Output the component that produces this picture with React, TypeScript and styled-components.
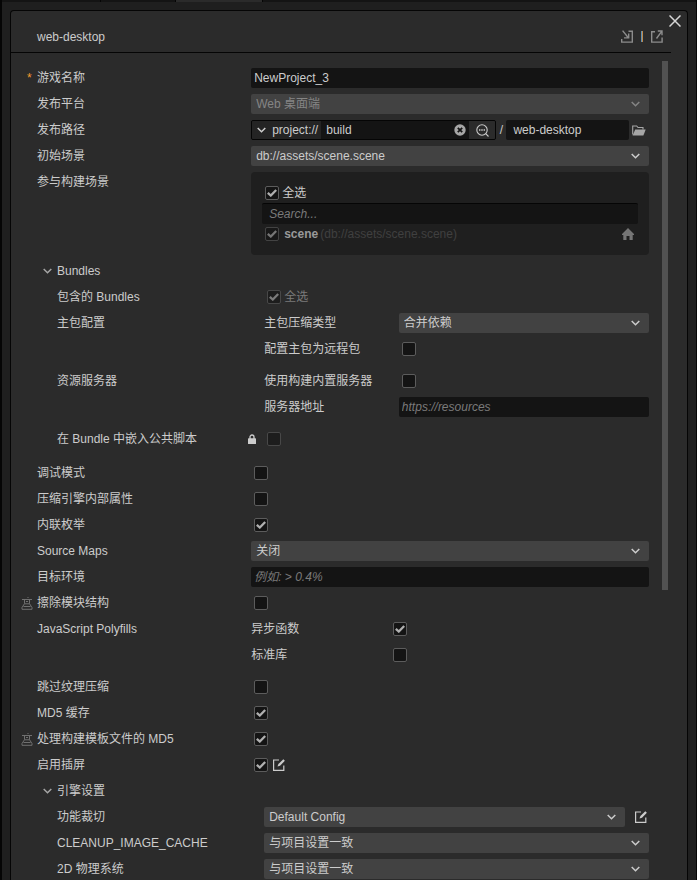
import React, { useId } from "react";
import styled, { createGlobalStyle, css } from "styled-components";

const GlobalStyle = createGlobalStyle`
  * { box-sizing: border-box; }
  html, body, #root { height: 100%; margin: 0; }
  body {
    background: #1f1f1f;
    color: #cccccc;
    font: 12px/20px "Liberation Sans", "Noto Sans CJK SC", sans-serif;
    overflow: hidden;
  }
  button, input, select { font: inherit; color: inherit; }
`;

const Window = styled.div`
  height: 100vh;
  display: flex;
  flex-direction: column;
  border-left: 2px solid #050505;
  border-right: 1px solid #050505;
  background: #1f1f1f;
`;

const TabStrip = styled.div`
  display: grid;
  grid-template-columns: 99px 75px 87px 1fr;
  height: 2px;
  flex: none;
  background: #141414;
`;

const TabEdge = styled.div<{ $active?: boolean }>`
  border-right: 1px solid #050505;
  background: ${(p) => (p.$active ? "#2b2b2b" : "#141414")};
`;

const Panel = styled.main`
  position: relative;
  flex: 1;
  min-height: 0;
  display: flex;
  flex-direction: column;
  margin: 8px 8px 0;
  border: 1px solid #050505;
  border-bottom: 0;
  border-radius: 4px 4px 0 0;
  background: #2b2b2b;
`;

const CloseButton = styled.button`
  position: absolute;
  top: 2px;
  right: 4px;
  width: 16px;
  height: 16px;
  padding: 0;
  border: 0;
  background: none;
  display: grid;
  place-items: center;
`;

const Header = styled.header`
  flex: none;
  display: flex;
  align-items: center;
  justify-content: space-between;
  height: 42px;
  margin-right: 16px;
  padding: 10px 8px 0 26px;
  border-bottom: 1px solid #050505;
`;

const Title = styled.h1`
  margin: 0;
  font-size: 12px;
  font-weight: 400;
`;

const HeaderActions = styled.div`
  display: flex;
  align-items: center;
  gap: 8px;
`;

const Divider = styled.span`
  width: 2px;
  height: 11px;
  border-left: 1px solid #5f8fb0;
  border-right: 1px solid #c08a4c;
`;

const IconButton = styled.button<{ $muted?: boolean }>`
  flex: none;
  display: grid;
  place-items: center;
  padding: 0;
  border: 0;
  background: none;
  color: ${(p) => (p.$muted ? "#8c8c8c" : "#cccccc")};
`;

const Body = styled.div`
  flex: 1;
  min-height: 0;
  display: flex;
  justify-content: space-between;
  padding: 8px 19px 0 26px;
`;

const Form = styled.form`
  flex: 1;
  min-width: 0;
  display: flex;
  flex-direction: column;
  gap: 6px;
  margin-right: 13px;
  padding-top: 7px;
`;

const ScrollTrack = styled.div`
  width: 6px;
`;

const ScrollThumb = styled.div`
  height: 64.6%;
  background: #525252;
`;

const Row = styled.div`
  position: relative;
  display: grid;
  grid-template-columns: 35% minmax(0, 1fr);
  align-items: start;
`;

const Label = styled.label`
  white-space: nowrap;
`;

const Caption = styled.span`
  white-space: nowrap;
`;

const Control = styled.div`
  display: flex;
  align-items: center;
  min-height: 20px;
`;

const Stack = styled.div<{ $tail?: number }>`
  display: flex;
  flex-direction: column;
  gap: 6px;
  padding-bottom: ${(p) => p.$tail ?? 0}px;
`;

const Nested = styled(Stack)`
  padding-left: 20px;
`;

const SectionHead = styled.button`
  align-self: flex-start;
  display: flex;
  align-items: center;
  gap: 5px;
  height: 20px;
  padding: 0 0 0 6px;
  border: 0;
  background: none;

  svg { color: #a6a6a6; }
`;

const Marker = styled.span`
  position: absolute;
  left: -16px;
  top: 0;
  height: 20px;
  display: grid;
  place-items: center;
  color: #707070;
`;

const Required = styled(Marker)`
  left: -10px;
  color: #f49b2f;
`;

const LockMarker = styled(Marker)`
  left: calc(35% - 16px);
  color: #cccccc;
`;

const TextInput = styled.input<{ $inset?: number }>`
  flex: 1;
  min-width: 0;
  width: 100%;
  height: 20px;
  padding: 0 ${(p) => p.$inset ?? 3}px;
  border: 0;
  border-radius: 2px;
  background: #141414;
  outline: none;
  &::placeholder {
    color: #7a7a7a;
    font-style: italic;
    opacity: 1;
  }
`;

const SelectBox = styled.div`
  position: relative;
  flex: 1;
  min-width: 0;
  display: grid;
  align-items: center;
`;

const NativeSelect = styled.select`
  appearance: none;
  width: 100%;
  height: 20px;
  padding: 0 24px 0 5px;
  border: 0;
  border-radius: 2px;
  background: #424242;
  outline: none;
  &:disabled { color: #858585; opacity: 1; }
`;

const SelectArrow = styled.span<{ $dim?: boolean }>`
  position: absolute;
  right: 9px;
  display: grid;
  pointer-events: none;
  color: ${(p) => (p.$dim ? "#858585" : "#cccccc")};
`;

const CheckFrame = styled.span<{ $dim?: boolean }>`
  flex: none;
  display: grid;
  place-items: center;
  width: 14px;
  height: 14px;
  margin: 0 3px;
  color: #b0b0b0;
  opacity: ${(p) => (p.$dim ? 0.6 : 1)};
`;

const CheckInput = styled.input`
  appearance: none;
  grid-area: 1 / 1;
  width: 14px;
  height: 14px;
  margin: 0;
  border: 1px solid #5c5c5c;
  border-radius: 2px;
  background: #141414;
`;

const Tick = styled.svg`
  grid-area: 1 / 1;
  z-index: 1;
  pointer-events: none;
`;

const PathControl = styled.div`
  display: grid;
  grid-template-columns: minmax(0, 2fr) 10px minmax(0, 1fr) 20px;
  align-items: center;
  width: 100%;
`;

const PathField = styled.div`
  min-width: 0;
  display: flex;
  align-items: center;
  height: 20px;
  border: 1px solid #050505;
  border-radius: 2px;
  background: #141414;
  overflow: hidden;
`;

const ProtocolButton = styled.button`
  flex: none;
  display: flex;
  align-items: center;
  gap: 6px;
  height: 18px;
  padding: 0 3px 0 5px;
  border: 0;
  background: #242424;
`;

const SearchButton = styled(IconButton)`
  width: 26px;
  height: 18px;
  margin-left: 3px;
  background: #2b2b2b;
`;

const Slash = styled.span`
  text-align: center;
`;

const FolderButton = styled(IconButton)`
  justify-self: center;
  color: #a6a6a6;
`;

const SceneBox = styled.div`
  padding: 11px;
  border-radius: 4px;
  background: #1f1f1f;
`;

const SceneSearch = styled(TextInput)`
  display: block;
  height: 21px;
  border-top: 1px solid #050505;
`;

const SceneRow = styled.div`
  display: flex;
  align-items: center;
  height: 20px;
  white-space: nowrap;
`;

const SceneName = styled.label`
  margin-left: 2px;
  color: #999999;
  font-weight: 700;
`;

const ScenePath = styled.span`
  flex: 1;
  margin-left: 2px;
  color: #404040;
`;

const HomeButton = styled(IconButton)`
  margin-right: 4px;
  color: #757575;
`;

const CheckLabel = styled.label<{ $dim?: boolean }>`
  ${(p) => p.$dim && css`color: #7a7a7a;`}
`;

const EditButton = styled(IconButton)<{ $gap: number; $end?: number }>`
  margin: 0 ${(p) => p.$end ?? 0}px 0 ${(p) => p.$gap}px;
`;

const Chevron = () => (
  <svg width="9" height="6" viewBox="0 0 9 6" fill="none" stroke="currentColor" strokeWidth="1.5">
    <path d="M.7 1l3.8 3.8L8.3 1" />
  </svg>
);

const EditIcon = () => (
  <svg width="12" height="12" viewBox="0 0 12 12" fill="none" stroke="currentColor" strokeWidth="1.2">
    <path d="M6 1H.6v10.4h10.2V6.5" />
    <path d="M4.5 7.6l.9-2.5L10.3.2l1.6 1.6L7 6.7z" fill="currentColor" stroke="none" />
  </svg>
);

const ImportIcon = () => (
  <svg width="12" height="13" viewBox="0 0 12 13" fill="none" stroke="currentColor" strokeWidth="1.4">
    <path d="M7.5 1.3h3.8v10.8H.7V9" />
    <path d="M1.6.6l5.9 7.4M3 7.9h4.7V3.6" />
  </svg>
);

const ExportIcon = () => (
  <svg width="12" height="13" viewBox="0 0 12 13" fill="none" stroke="currentColor" strokeWidth="1.4">
    <path d="M4 1.7H.7v10.4h10.4V7.5" />
    <path d="M5.5 8.5l5.2-7.2M6.8 1h4.2v4.2" />
  </svg>
);

const CloseIcon = () => (
  <svg width="12" height="12" viewBox="0 0 12 12" fill="none" stroke="#d6d6d6" strokeWidth="1.5">
    <path d="M.5.5l11 11M11.5.5l-11 11" />
  </svg>
);

const ClearIcon = () => (
  <svg width="12" height="12" viewBox="0 0 12 12">
    <circle cx="6" cy="6" r="5.7" fill="#a6a6a6" />
    <path d="M3.8 3.8l4.4 4.4M8.2 3.8L3.8 8.2" stroke="#141414" strokeWidth="1.8" />
  </svg>
);

const SearchIcon = () => (
  <svg width="13" height="13" viewBox="0 0 13 13" fill="none" stroke="currentColor" strokeWidth="1.1">
    <circle cx="6" cy="6" r="5.2" />
    <path d="M9.7 9.7l2.8 2.8" />
    <path d="M3 6h1.4M5.3 6h1.4M7.6 6H9" strokeWidth="1.4" />
  </svg>
);

const FolderIcon = () => (
  <svg width="14" height="11" viewBox="0 0 14 11">
    <path d="M.7 9.5V1h4l1.3 1.5h5V4.5" fill="none" stroke="currentColor" strokeWidth="1.1" />
    <path d="M3.2 4.5H13.7L11.4 10.5H.6z" fill="currentColor" />
  </svg>
);

const HomeIcon = () => (
  <svg width="12" height="12" viewBox="0 0 12 12" fill="currentColor">
    <path d="M6 0L0 6v1h1.3v5h3.2V8h3v4h3.2V7H12V6z" />
  </svg>
);

const LockIcon = () => (
  <svg width="8" height="10" viewBox="0 0 8 10">
    <path d="M2 5V3a2 2 0 014 0v2" fill="none" stroke="currentColor" strokeWidth="1.3" />
    <rect x="0" y="4.2" width="8" height="5.8" rx=".6" fill="currentColor" />
  </svg>
);

const FlaskIcon = () => (
  <svg width="12" height="13" viewBox="0 0 12 13" fill="none" stroke="currentColor">
    <path d="M1 2.5h10M3.5 2.5v4.2L1 10.5v1.8h10v-1.8L8.5 6.7V2.5" />
    <path d="M5 4.5h2M3.5 6.8h5M2.5 9.5h7" />
    <path d="M6.5.5h1" />
  </svg>
);

type CheckProps = { id?: string; checked?: boolean; dim?: boolean };

const Check = ({ id, checked, dim }: CheckProps) => (
  <CheckFrame $dim={dim}>
    <CheckInput type="checkbox" id={id} defaultChecked={checked} disabled={dim} />
    {checked && (
      <Tick width="10" height="8" viewBox="0 0 10 8" fill="none" stroke="currentColor" strokeWidth="2.3">
        <path d="M.8 3.8l3 2.7L9.2 1" />
      </Tick>
    )}
  </CheckFrame>
);

const Select = ({ id, value, disabled }: { id: string; value: string; disabled?: boolean }) => (
  <SelectBox>
    <NativeSelect id={id} disabled={disabled}>
      <option>{value}</option>
    </NativeSelect>
    <SelectArrow $dim={disabled}><Chevron /></SelectArrow>
  </SelectBox>
);

type FieldProps = {
  label: string;
  marker?: React.ReactNode;
  children: (id: string) => React.ReactNode;
};

const Field = ({ label, marker, children }: FieldProps) => {
  const id = useId();
  return (
    <Row>
      {marker}
      <Label htmlFor={id}>{label}</Label>
      <Control>{children(id)}</Control>
    </Row>
  );
};

const flask = <Marker><FlaskIcon /></Marker>;

export default function App() {
  return (
    <>
      <GlobalStyle />
      <Window>
        <TabStrip>
          <TabEdge />
          <TabEdge />
          <TabEdge $active />
        </TabStrip>
        <Panel>
          <CloseButton aria-label="关闭面板"><CloseIcon /></CloseButton>
          <Header>
            <Title>web-desktop</Title>
            <HeaderActions>
              <IconButton $muted aria-label="导入"><ImportIcon /></IconButton>
              <Divider />
              <IconButton $muted aria-label="导出"><ExportIcon /></IconButton>
            </HeaderActions>
          </Header>
          <Body>
            <Form>
              <Field label="游戏名称" marker={<Required>*</Required>}>
                {(id) => <TextInput id={id} defaultValue="NewProject_3" />}
              </Field>
              <Field label="发布平台">{(id) => <Select id={id} value="Web 桌面端" disabled />}</Field>
              <Field label="发布路径">
                {(id) => (
                  <PathControl>
                    <PathField>
                      <ProtocolButton type="button"><Chevron />project://</ProtocolButton>
                      <TextInput id={id} $inset={5} defaultValue="build" />
                      <IconButton type="button" aria-label="清除"><ClearIcon /></IconButton>
                      <SearchButton type="button" aria-label="浏览"><SearchIcon /></SearchButton>
                    </PathField>
                    <Slash>/</Slash>
                    <TextInput $inset={7} aria-label="输出目录" defaultValue="web-desktop" />
                    <FolderButton type="button" aria-label="打开目录"><FolderIcon /></FolderButton>
                  </PathControl>
                )}
              </Field>
              <Field label="初始场景">{(id) => <Select id={id} value="db://assets/scene.scene" />}</Field>
              <Row>
                <Caption>参与构建场景</Caption>
                <SceneBox>
                  <SceneRow>
                    <Check id="all-scenes" checked />
                    <CheckLabel htmlFor="all-scenes">全选</CheckLabel>
                  </SceneRow>
                  <SceneSearch $inset={7} aria-label="搜索场景" placeholder="Search..." />
                  <SceneRow>
                    <Check id="scene" checked dim />
                    <SceneName htmlFor="scene">scene</SceneName>
                    <ScenePath>(db://assets/scene.scene)</ScenePath>
                    <HomeButton type="button" aria-label="设为初始场景"><HomeIcon /></HomeButton>
                  </SceneRow>
                </SceneBox>
              </Row>

              <SectionHead type="button"><Chevron />Bundles</SectionHead>
              <Nested $tail={8}>
                <Row>
                  <Caption>包含的 Bundles</Caption>
                  <Control>
                    <Check id="all-bundles" checked dim />
                    <CheckLabel $dim htmlFor="all-bundles">全选</CheckLabel>
                  </Control>
                </Row>
                <Row>
                  <Caption>主包配置</Caption>
                  <Stack $tail={6}>
                    <Field label="主包压缩类型">{(id) => <Select id={id} value="合并依赖" />}</Field>
                    <Field label="配置主包为远程包">{(id) => <Check id={id} />}</Field>
                  </Stack>
                </Row>
                <Row>
                  <Caption>资源服务器</Caption>
                  <Stack $tail={6}>
                    <Field label="使用构建内置服务器">{(id) => <Check id={id} />}</Field>
                    <Field label="服务器地址">
                      {(id) => <TextInput id={id} placeholder="https://resources" />}
                    </Field>
                  </Stack>
                </Row>
                <Field label="在 Bundle 中嵌入公共脚本" marker={<LockMarker><LockIcon /></LockMarker>}>
                  {(id) => <Check id={id} dim />}
                </Field>
              </Nested>

              <Field label="调试模式">{(id) => <Check id={id} />}</Field>
              <Field label="压缩引擎内部属性">{(id) => <Check id={id} />}</Field>
              <Field label="内联枚举">{(id) => <Check id={id} checked />}</Field>
              <Field label="Source Maps">{(id) => <Select id={id} value="关闭" />}</Field>
              <Field label="目标环境">{(id) => <TextInput id={id} placeholder="例如: > 0.4%" />}</Field>
              <Field label="擦除模块结构" marker={flask}>{(id) => <Check id={id} />}</Field>
              <Row>
                <Caption>JavaScript Polyfills</Caption>
                <Stack $tail={6}>
                  <Field label="异步函数">{(id) => <Check id={id} checked />}</Field>
                  <Field label="标准库">{(id) => <Check id={id} />}</Field>
                </Stack>
              </Row>
              <Field label="跳过纹理压缩">{(id) => <Check id={id} />}</Field>
              <Field label="MD5 缓存">{(id) => <Check id={id} checked />}</Field>
              <Field label="处理构建模板文件的 MD5" marker={flask}>{(id) => <Check id={id} checked />}</Field>
              <Field label="启用插屏">
                {(id) => (
                  <>
                    <Check id={id} checked />
                    <EditButton type="button" $gap={2} aria-label="编辑插屏"><EditIcon /></EditButton>
                  </>
                )}
              </Field>

              <SectionHead type="button"><Chevron />引擎设置</SectionHead>
              <Nested>
                <Field label="功能裁切">
                  {(id) => (
                    <>
                      <Select id={id} value="Default Config" />
                      <EditButton type="button" $gap={10} $end={2} aria-label="编辑配置"><EditIcon /></EditButton>
                    </>
                  )}
                </Field>
                <Field label="CLEANUP_IMAGE_CACHE">{(id) => <Select id={id} value="与项目设置一致" />}</Field>
                <Field label="2D 物理系统">{(id) => <Select id={id} value="与项目设置一致" />}</Field>
              </Nested>
            </Form>
            <ScrollTrack><ScrollThumb /></ScrollTrack>
          </Body>
        </Panel>
      </Window>
    </>
  );
}
